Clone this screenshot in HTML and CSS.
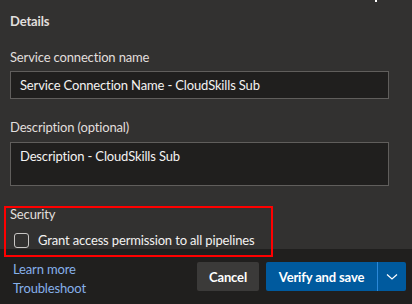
FILE: index.html
```html
<!DOCTYPE html>
<html>
<head>
<meta charset="utf-8">
<link rel="stylesheet" href="styles.css">
</head>
<body>
<div class="panel">
  <div class="content">
    <div class="section-title">Details</div>
    <label class="label">Service connection name</label>
    <div class="input">Service Connection Name - CloudSkills Sub</div>
    <label class="label desc-label">Description (optional)</label>
    <div class="textarea">Description - CloudSkills Sub</div>
    <div class="security">
      <div class="security-title">Security</div>
      <div class="check-row">
        <span class="checkbox"></span>
        <span class="check-text">Grant access permission to all pipelines</span>
      </div>
    </div>
  </div>
  <div class="footer">
    <div class="links">
      <a class="link">Learn more</a>
      <a class="link">Troubleshoot</a>
    </div>
    <div class="buttons">
      <button class="btn cancel">Cancel</button>
      <div class="split">
        <button class="btn primary">Verify and save</button>
        <button class="btn primary chevron"><svg width="12" height="8" viewBox="0 0 12 8"><path d="M1 1.5 L6 6 L11 1.5" fill="none" stroke="#ffffff" stroke-width="1.2"/></svg></button>
      </div>
    </div>
  </div>
  <div class="highlight"></div>
  <div class="cursor"></div>
</div>
</body>
</html>
```

FILE: styles.css
```css
html, body {
  margin: 0;
  padding: 0;
}
body {
  background: #323130;
  font-family: "Lato", "Noto Sans", sans-serif;
  font-size: 13px;
  letter-spacing: -0.15px;
  color: #e1dfdd;
  width: 412px;
  height: 304px;
  overflow: hidden;
}
.panel {
  position: relative;
  width: 412px;
  height: 304px;
  display: flex;
  flex-direction: column;
}
.content {
  padding: 11px 23px 0 10px;
  display: flex;
  flex-direction: column;
  height: 249px;
  flex-shrink: 0;
  box-sizing: border-box;
}
.content > * {
  flex-shrink: 0;
}
.section-title {
  font-weight: 700;
  line-height: 20px;
  height: 20px;
  color: #e1dfdd;
}
.label {
  line-height: 20px;
  margin-top: 16px;
}
.input {
  margin-top: 4px;
  height: 28px;
  box-sizing: border-box;
  border: 1px solid #605e5c;
  background: #201f1e;
  padding: 0 9px;
  line-height: 26px;
  color: #f3f2f1;
}
.desc-label {
  margin-top: 18px;
}
.textarea {
  margin-top: 5px;
  height: 44px;
  box-sizing: border-box;
  border: 1px solid #605e5c;
  background: #201f1e;
  padding: 3px 9px;
  line-height: 20px;
  color: #f3f2f1;
}
.security {
  margin-top: 18px;
}
.security-title {
  line-height: 20px;
}
.check-row {
  display: flex;
  align-items: center;
  gap: 9px;
  margin-top: 8px;
  padding-left: 4px;
  height: 16px;
}
.checkbox {
  width: 15px;
  height: 15px;
  box-sizing: border-box;
  border: 1px solid #c8c6c4;
  border-radius: 3px;
}
.check-text {
  line-height: 16px;
  color: #f3f2f1;
}
.footer {
  flex: 1;
  background: #201f1e;
  display: flex;
  justify-content: space-between;
  align-items: flex-start;
  padding: 11px 6px 0 13px;
}
.links {
  display: flex;
  flex-direction: column;
}
.link {
  color: #86b0ea;
  line-height: 19px;
}
.buttons {
  display: flex;
  gap: 7px;
  margin-top: 2px;
}
.btn {
  font-family: inherit;
  font-size: 13px;
  letter-spacing: -0.15px;
  font-weight: 700;
  color: #ffffff;
  border: none;
  height: 29px;
  padding: 0;
  border-radius: 2px;
}
.cancel {
  width: 62px;
  background: #3b3a39;
}
.split {
  display: flex;
}
.primary {
  background: #005a9e;
  width: 111px;
  border-radius: 2px 0 0 2px;
}
.chevron {
  width: 29px;
  border-left: 1px solid #2b88d8;
  border-radius: 0 2px 2px 0;
  display: flex;
  align-items: center;
  justify-content: center;
}
.highlight {
  position: absolute;
  left: 4px;
  top: 206px;
  width: 269px;
  height: 51px;
  box-sizing: border-box;
  border: 2px solid #ff0000;
}
.cursor {
  position: absolute;
  left: 375px;
  top: 0;
  width: 2px;
  height: 2px;
  background: #ffffff;
}
```
